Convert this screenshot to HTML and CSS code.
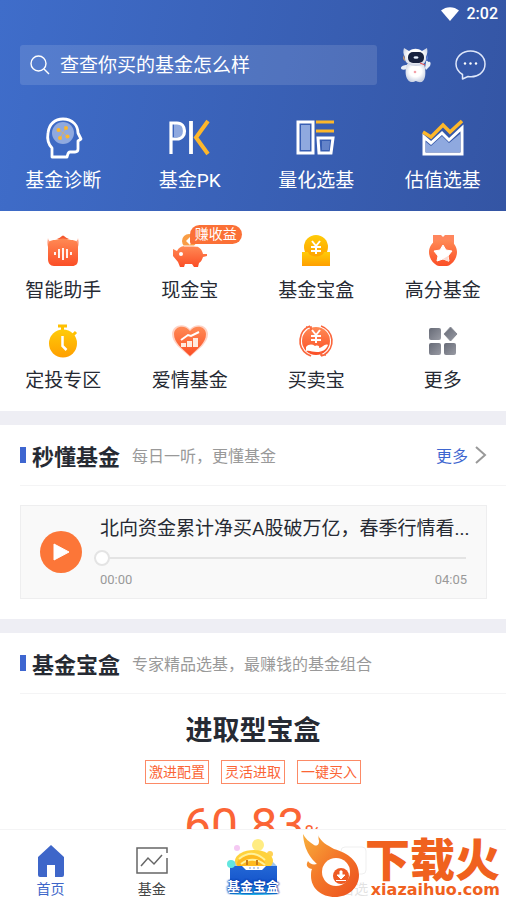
FILE: index.html
```html
<!DOCTYPE html>
<html lang="zh-CN">
<head>
    <meta charset="UTF-8">
    <meta name="viewport" content="width=device-width, initial-scale=1.0">
    <title>基金</title>
    <link rel="stylesheet" href="styles.css">
</head>
<body>

    <header class="top">
        <div class="status">
            <svg width="18" height="14" viewBox="0 0 18 14"><path d="M0 3.5C5-1 13-1 18 3.5L9 14z" fill="#fff"/></svg>
            <span>2:02</span>
        </div>

        <div class="search-row">
            <label class="search">
                <svg width="20" height="20" viewBox="0 0 20 20" fill="none" stroke="#fff" stroke-width="1.4"><circle cx="8.5" cy="8.5" r="7.5"/><path d="M14 14l5 5"/></svg>
                <input type="text" placeholder="查查你买的基金怎么样" aria-label="搜索基金">
            </label>
            <button class="icon-button" aria-label="机器人">
                <svg width="30" height="36" viewBox="0 0 30 36">
                    <defs>
                        <radialGradient id="robot" cx=".5" cy=".4" r=".6"><stop offset=".5" stop-color="#fff"/><stop offset="1" stop-color="#c8d0e2"/></radialGradient>
                    </defs>
                    <path d="M6 18C3 18 0 19 0 21s3 2 6 1zM24 21l1-6c0-2 2-1 2 0 3-1 3 2 2 4l-4 4z" fill="#e8edf6"/>
                    <path d="M6 17h17c2 6 2 14-1 17-2 2-5 1-7 0-2 1-6 2-8-1-3-4-3-10-1-16z" fill="url(#robot)"/>
                    <path d="M3 1l5 3c4-3 9-3 13 0l5-3c1 4 0 6-1 9 1 6-4 9-10 9S3 16 4 10C2 7 2 4 3 1z" fill="url(#robot)"/>
                    <path d="M3 8q-2 4 1 6z" fill="#f4ad60"/><path d="M26 8q2 4-1 6z" fill="#6685d8"/>
                    <rect x="7" y="5" width="16" height="11" rx="5" fill="#18223f"/>
                    <ellipse cx="15" cy="10.500" rx="2.500" ry="1.200" fill="#e8f2ff"/>
                    <path d="M19 16l5 2" stroke="#e94a4a" stroke-width="1"/>
                    <circle cx="14" cy="25" r="1.300" fill="#f4a0a8"/>
                </svg>
            </button>
            <button class="icon-button" aria-label="消息">
                <svg width="31" height="30" viewBox="0 0 31 30" fill="none" stroke="#dfe7fa" stroke-width="1.500">
                    <path d="M7.500 24.500L7.500 29l5.500-2.500C23 28 30 22 30 14 30 7 24 1 15.500 1S1 7 1 14c0 4.500 2.500 8 6.500 10.500z" stroke-linejoin="round"/>
                    <g fill="#fff" stroke="none"><circle cx="10" cy="13.500" r="1.200"/><circle cx="15.500" cy="13.500" r="1.200"/><circle cx="21" cy="13.500" r="1.200"/></g>
                </svg>
            </button>
        </div>

        <nav class="tools">
            <a href="#">
                <svg width="44" height="42" viewBox="-3 0 44 42" fill="none">
                    <path d="M8 40V31C4 27 3 22 4 16 5 7 11 2 19 2c10 0 15 7 15 14l3 6-3 2v8c0 2-1 3-3 3h-5c-2 0-2 2-3 5z" stroke="#fff" stroke-width="2.800" stroke-linejoin="round"/>
                    <circle cx="19" cy="16" r="11" fill="#8fa9df"/>
                    <path d="M15 13l8 6M22 11l-6 10" stroke="#c9ae82" stroke-width="1"/>
                    <g fill="#fdb72b"><circle cx="14.500" cy="13" r="2"/><circle cx="22" cy="11" r="2"/><circle cx="16" cy="21" r="2"/><circle cx="23.500" cy="19.500" r="2"/></g>
                </svg>
                <span>基金诊断</span>
            </a>
            <a href="#">
                <svg width="44" height="42" viewBox="0 0 44 42" fill="none">
                    <path d="M6 7h5c8 0 8 13 0 13H6z" fill="#8fa9df"/>
                    <path d="M3 37V6h6c10 0 10 16 0 16H4" stroke="#fff" stroke-width="3.200"/>
                    <path d="M23 4v33" stroke="#fff" stroke-width="3.800"/>
                    <path d="M40 4L28 20.500 40 37" stroke="#fdb72b" stroke-width="4"/>
                </svg>
                <span>基金PK</span>
            </a>
            <a href="#">
                <svg width="44" height="42" viewBox="0 0 44 42" fill="none">
                    <rect x="4" y="5" width="15" height="31" stroke="#fff" stroke-width="3"/>
                    <rect x="7" y="8" width="9" height="25" fill="#8fa9df"/>
                    <path d="M22 5h18M22 14h18" stroke="#fdb72b" stroke-width="3"/>
                    <path d="M24 21h15l-2 15H25z" stroke="#fff" stroke-width="3"/>
                    <path d="M28 24h8l-1 9h-7z" fill="#8fa9df" opacity=".5"/>
                </svg>
                <span>量化选基</span>
            </a>
            <a href="#">
                <svg width="44" height="42" viewBox="0 0 44 42" fill="none">
                    <path d="M5 25l5 4 11-10 7 7 11-9v18H5z" fill="#8fa9df"/>
                    <path d="M3 20l7 6 11-10 7 7 13-12v26H3z" stroke="#fff" stroke-width="3"/>
                    <path d="M2 15l8 5L22 8l7 7L41 4" stroke="#fdb72b" stroke-width="3.500"/>
                </svg>
                <span>估值选基</span>
            </a>
        </nav>
    </header>

    <main class="content">
        <nav class="menu">
            <a href="#">
                <svg width="36" height="36" viewBox="0 0 36 36">
                    <defs>
                        <linearGradient id="orange" x1="0" y1="0" x2="0" y2="1"><stop offset="0" stop-color="#ff8a55"/><stop offset="1" stop-color="#fb4e26"/></linearGradient>
                        <linearGradient id="yellow" x1="0" y1="0" x2="0" y2="1"><stop offset="0" stop-color="#ffcb08"/><stop offset="1" stop-color="#ff9f00"/></linearGradient>
                        <linearGradient id="grey" x1="0" y1="0" x2="1" y2="1"><stop offset="0" stop-color="#666a76"/><stop offset="1" stop-color="#999ba4"/></linearGradient>
                    </defs>
                    <path d="M3 5q0 3 5 5l-3 8Q1 13 3 5zM33 5q0 3-5 5l3 8q4-5 2-13z" fill="#ffa184"/>
                    <path d="M12 6q3-1 5-3 1-1 2 0 2 2 5 3z" fill="#f4592f"/>
                    <path d="M10 7q8-3 16 0c5 0 7 2 7 6v13c0 5-2 7-6 7H9c-4 0-6-3-6-7V13c0-4 2-6 7-6z" fill="url(#orange)"/>
                    <path d="M10 19v3M14 16v9M18 15v12M22 16v9M26 19v3" stroke="#fff" stroke-width="1.800"/>
                </svg>
                <span>智能助手</span>
            </a>
            <a href="#" class="has-badge">
                <svg width="36" height="36" viewBox="0 0 36 36">
                    <circle cx="17" cy="8" r="7" fill="#f99d45"/><path d="M14 8l4-4 2 4-2 4z" fill="#fff"/>
                    <path d="M1 16l4 2c2-4 5-5 9-5h7c6 0 9 3 10 8h4v2l-4 1c-1 3-2 5-4 6l-1 4h-4l-2-3h-7l-1 3H8l-2-5-5-6z" fill="url(#orange)"/>
                    <circle cx="9" cy="21" r="2" fill="#fff"/><path d="M12 13h13" stroke="#fff"/>
                </svg>
                <em class="badge">赚收益</em>
                <span>现金宝</span>
            </a>
            <a href="#">
                <svg width="36" height="36" viewBox="0 0 36 36">
                    <circle cx="18" cy="14" r="12" fill="url(#yellow)"/>
                    <path d="M4 19h6c1 6 15 6 16 0h6v14H4z" fill="url(#yellow)"/>
                    <path d="M14 8l4 5 4-5M18 13v8M13 14h10M13 18h10" fill="none" stroke="#fff" stroke-width="2"/>
                </svg>
                <span>基金宝盒</span>
            </a>
            <a href="#">
                <svg width="36" height="36" viewBox="0 0 36 36">
                    <path d="M8 2h8l2 2 2-2h9v14H8z" fill="#ff865d"/>
                    <path d="M11 7h14c4 3 7 7 7 12 0 4-2 9-6 12q-2 2-4 2h-8q-2 0-4-2c-4-3-6-8-6-12 0-5 3-9 7-12z" fill="url(#orange)"/>
                    <path d="M18 12l3 5 6 1-4 5 1 5-6-2-6 2 1-5-4-5 6-1z" fill="#fff" stroke="#fff" stroke-linejoin="round"/>
                    <path d="M24 29l-6-3 5-3z" fill="#fbd8cf"/>
                </svg>
                <span>高分基金</span>
            </a>
            <a href="#">
                <svg width="36" height="36" viewBox="0 0 36 36">
                    <path d="M13 3h9M17.500 3v6M28 12l3-3" fill="none" stroke="#ffc000" stroke-width="3"/>
                    <circle cx="18" cy="20.500" r="14" fill="url(#yellow)"/>
                    <path d="M17.500 13v10l4 4" fill="none" stroke="#fff" stroke-width="2.500"/>
                </svg>
                <span>定投专区</span>
            </a>
            <a href="#">
                <svg width="36" height="36" viewBox="0 0 36 36">
                    <path d="M18 34C9 26 0 20 0 11 0 2 12-1 18 6c6-7 18-4 18 5 0 9-9 15-18 23z" fill="#ffd2c4"/>
                    <path d="M18 33C10 25 2 20 2 11 2 3 13 1 18 8c5-7 16-5 16 3 0 9-8 14-16 22z" fill="url(#orange)"/>
                    <path d="M9 20h5v4H9zM15 18h5v6h-5zM21 15h5v9h-5z" fill="#ffe9df"/>
                    <path d="M9 17l7-5 3 1 8-4" fill="none" stroke="#fff" stroke-width="2"/>
                </svg>
                <span>爱情基金</span>
            </a>
            <a href="#">
                <svg width="36" height="36" viewBox="0 0 36 36">
                    <circle cx="18" cy="18" r="14" fill="url(#orange)"/>
                    <path d="M12 3A16 16 0 0 0 9 31l4 2M23 3a16 16 0 0 1 3 29l-3 1M8 4h5v4M28 32h-5v-4" fill="none" stroke="#fb673d" stroke-width="1.700"/>
                    <path d="M14 7l4 5 4-5M18 12v8M13 13h10M13 17h10" fill="none" stroke="#fff" stroke-width="2"/>
                    <path d="M8 24c3-3 6-3 9-1 3-1 5 0 4 2 3 0 6-5 9-3-2 5-6 7-11 7-5 0-7-2-11-1z" fill="#fff"/>
                </svg>
                <span>买卖宝</span>
            </a>
            <a href="#">
                <svg width="36" height="36" viewBox="0 0 36 36" fill="url(#grey)">
                    <rect x="4" y="5" width="12" height="12" rx="2"/><rect x="4" y="20" width="12" height="12" rx="2"/><rect x="19" y="20" width="12" height="12" rx="2"/>
                    <path d="M25.500 4l6.500 7-6.500 7-6.500-7z" stroke="#888b94" stroke-linejoin="round"/>
                </svg>
                <span>更多</span>
            </a>
        </nav>

        <section class="section">
            <div class="section-head">
                <h2>秒懂基金</h2>
                <p>每日一听，更懂基金</p>
                <a href="#" class="more">更多
                    <svg width="12" height="18" viewBox="0 0 12 18" fill="none" stroke="#999" stroke-width="2"><path d="M1 1l9 8-9 8"/></svg>
                </a>
            </div>
            <div class="player">
                <button class="play" aria-label="播放">
                    <svg width="18" height="18" viewBox="0 0 18 18"><path d="M2 1l15 8-15 8z" fill="#fff" stroke="#fff" stroke-linejoin="round"/></svg>
                </button>
                <div class="track">
                    <h3>北向资金累计净买A股破万亿，春季行情看...</h3>
                    <input type="range" min="0" max="245" value="0" aria-label="播放进度">
                    <div class="times"><span>00:00</span><span>04:05</span></div>
                </div>
            </div>
        </section>

        <section class="section">
            <div class="section-head">
                <h2>基金宝盒</h2>
                <p>专家精品选基，最赚钱的基金组合</p>
            </div>
            <div class="box">
                <h3>进取型宝盒</h3>
                <div class="tags">
                    <span>激进配置</span>
                    <span>灵活进取</span>
                    <span>一键买入</span>
                </div>
                <div class="rate">60.83<small>%</small></div>
            </div>
        </section>
    </main>

    <footer class="tabbar">
        <a href="#" class="active">
            <svg width="30" height="34" viewBox="0 0 30 34"><path d="M15 1l13 12v18q0 2-2 2h-7V21h-8v12H4q-2 0-2-2V13z" fill="#3e66c9"/></svg>
            <span>首页</span>
        </a>
        <a href="#">
            <svg width="34" height="34" viewBox="0 0 34 34" fill="none" stroke="#666" stroke-width="1.500"><path d="M32 9V4H2v25h30V14M6 22l7-8 6 6 8-9"/></svg>
            <span>基金</span>
        </a>
        <a href="#" class="promo">
            <svg width="52" height="56" viewBox="0 0 52 56">
                <defs>
                    <linearGradient id="blue" x1="0" y1="0" x2="0" y2="1"><stop offset="0" stop-color="#2367d5"/><stop offset=".6" stop-color="#1555cb"/><stop offset="1" stop-color="#1dbbed"/></linearGradient>
                </defs>
                <circle cx="31" cy="6" r="6" fill="#ffec82"/><circle cx="10" cy="9" r="3" fill="#f5c9f3"/><circle cx="43" cy="15" r="3" fill="#ffd155"/>
                <path d="M3 27l10-10h27l10 10z" fill="#9fc6ee"/>
                <ellipse cx="27" cy="22" rx="19" ry="11" fill="#ffd23c"/>
                <ellipse cx="24" cy="25" rx="14" ry="9" fill="#ffba20"/>
                <path d="M12 20q13-11 26 1M14 25q12-9 24 1" fill="none" stroke="#fff19a" stroke-width="2"/>
                <path d="M20 21v5M30 21v5" stroke="#c77b1b" stroke-width="2"/>
                <path d="M3 27h47v28q-23 2-47 0z" fill="url(#blue)"/>
                <path d="M15 27h24l-4 4H19z" fill="#fff"/>
                <path d="M22 29h2M26 29h2M30 29h2" stroke="#779bd8"/>
                <circle cx="4" cy="25" r="4" fill="#63e6df"/>
            </svg>
            <span>基金宝盒</span>
        </a>
        <a href="#" class="faded">
            <svg width="34" height="34" viewBox="0 0 34 34" fill="none" stroke="#999"><rect x="4" y="3" width="25" height="27" rx="4"/></svg>
            <span>自选</span>
        </a>

        <div class="brand">
            <svg width="60" height="64" viewBox="0 0 60 64">
                <defs>
                    <linearGradient id="fire" x1="0" y1="0" x2="1" y2="1"><stop offset="0" stop-color="#f8b03c"/><stop offset=".45" stop-color="#f47a2a"/><stop offset="1" stop-color="#ec4f1d"/></linearGradient>
                </defs>
                <path d="M2 0c2 4 6 8 11 11 2 1 5 1 5-4-1-3 0-4-1-6 3 7 9 10 16 14 14 4 25 12 25 26 0 13-11 22-24 22-14 0-24-9-24-21 0-3 0-5 1-7-6-1-6-5-4-8 2 3 5 4 9 3C12 26 3 18 2 0z" fill="url(#fire)"/>
                <circle cx="35" cy="38" r="14" fill="#fff"/>
                <circle cx="40" cy="42" r="8" fill="#ee5a23"/>
                <path d="M39 37h2v4h3l-4 4-4-4h3zM35 46.500h10" fill="#fff" stroke="#fff" stroke-width="1"/>
            </svg>
            <div class="brand-text">
                <strong>下载火</strong>
                <span>xiazaihuo.com</span>
            </div>
        </div>
    </footer>

</body>
</html>
```
FILE: styles.css
```css
* {
    box-sizing: border-box;
}
body {
    margin: 0;
    height: 100vh;
    display: flex;
    flex-direction: column;
    overflow: hidden;
    background: #fff;
    color: #262a33;
    font-family: Roboto, "Noto Sans CJK SC", sans-serif;
}
h2, h3, p {
    margin: 0;
}
a {
    color: inherit;
    text-decoration: none;
}
button {
    border: none;
    padding: 0;
    background: none;
    cursor: pointer;
}
svg {
    display: block;
    flex: none;
}

/* header */
.top {
    flex: none;
    background: linear-gradient(100deg, #3f6dca, #3455a4);
    color: #fff;
}
.status {
    display: flex;
    justify-content: flex-end;
    align-items: center;
    gap: 8px;
    height: 27px;
    padding-right: 8px;
    font-size: 16px;
    font-weight: 500;
}
.search-row {
    display: flex;
    align-items: center;
    gap: 24px;
    padding: 18px 20px 0;
}
.search {
    flex: 1;
    display: flex;
    align-items: center;
    gap: 10px;
    height: 40px;
    padding: 0 10px;
    border-radius: 3px;
    background: rgba(255, 255, 255, 0.12);
}
.search input {
    flex: 1;
    min-width: 0;
    border: none;
    padding: 0;
    outline: none;
    background: none;
    color: #fff;
    font-family: inherit;
    font-size: 19px;
}
.search input::placeholder {
    color: #fff;
    opacity: 1;
}

/* icon links */
.tools,
.menu {
    display: grid;
    grid-template-columns: repeat(4, 1fr);
    font-size: 19px;
    line-height: 28px;
}
.tools {
    padding: 32px 0 16px;
}
.menu {
    padding: 22px 0 12px;
    row-gap: 14px;
}
.tools a,
.menu a {
    display: flex;
    flex-direction: column;
    align-items: center;
}
.tools a {
    gap: 8px;
}
.menu a {
    gap: 8px;
    padding-bottom: 4px;
    color: #262a33;
}
.has-badge {
    position: relative;
}
.badge {
    position: absolute;
    top: -8px;
    left: 50%;
    padding: 0 5px;
    border-radius: 10px 10px 10px 2px;
    background: #fb7036;
    color: #fff;
    font-size: 14px;
    font-style: normal;
    line-height: 19px;
}

.content {
    flex: 1;
    min-height: 0;
    overflow: hidden;
}

/* sections */
.section {
    border-top: 14px solid #eeeef4;
}
.section-head {
    display: flex;
    align-items: center;
    height: 61px;
    margin-left: 20px;
    padding-right: 19px;
    border-bottom: 1px solid #f4f4f5;
}
.section-head::before {
    content: "";
    width: 6px;
    height: 16px;
    margin-right: 6px;
    background: #3e66d0;
}
.section-head h2 {
    font-size: 22px;
}
.section-head p {
    margin-left: 12px;
    color: #999;
    font-size: 16px;
}
.more {
    display: flex;
    align-items: center;
    gap: 7px;
    margin-left: auto;
    color: #3e66d0;
    font-size: 16px;
}

/* audio player */
.player {
    display: flex;
    align-items: center;
    gap: 18px;
    margin: 19px 19px 20px 20px;
    padding: 9px 16px 9px 19px;
    border: 1px solid #eeeeef;
    background: #f9f9f9;
}
.play {
    display: flex;
    align-items: center;
    justify-content: center;
    flex: none;
    width: 42px;
    height: 42px;
    border-radius: 50%;
    background: #fc7638;
}
.track {
    flex: 1;
    min-width: 0;
}
.track h3 {
    overflow: hidden;
    font-size: 19px;
    font-weight: 400;
    line-height: 28px;
    text-overflow: ellipsis;
    white-space: nowrap;
}
.track input {
    display: block;
    appearance: none;
    width: calc(100% + 2px);
    height: 16px;
    margin: 7px 0 5px -6px;
    background: linear-gradient(#e4e4e4, #e4e4e4) center / 100% 2px no-repeat;
}
.track input::-webkit-slider-thumb {
    appearance: none;
    width: 16px;
    height: 16px;
    border: 2px solid #e4e4e4;
    border-radius: 50%;
    background: #fff;
}
.times {
    display: flex;
    justify-content: space-between;
    padding-right: 3px;
    color: #999;
    font-size: 13px;
    line-height: 18px;
}

/* fund box */
.box {
    display: flex;
    flex-direction: column;
    align-items: center;
    padding-top: 17px;
}
.box h3 {
    font-size: 27px;
    line-height: 40px;
}
.tags {
    display: flex;
    gap: 12px;
    margin-top: 9px;
}
.tags span {
    padding: 0 3px;
    border: 1px solid #fc8a66;
    color: #fb6535;
    font-size: 14px;
    line-height: 22px;
}
.rate {
    margin-top: 12px;
    color: #fb6535;
    font-size: 48px;
    line-height: 60px;
}
.rate small {
    font-size: 24px;
}

/* bottom bar */
.tabbar {
    position: relative;
    flex: none;
    display: grid;
    grid-template-columns: repeat(5, 1fr);
    height: 71px;
    border-top: 1px solid #f4f4f5;
    background: #fff;
    color: #444;
    font-size: 14px;
    line-height: 20px;
}
.tabbar a {
    display: flex;
    flex-direction: column;
    align-items: center;
    gap: 1px;
    padding-top: 14px;
}
.tabbar .active {
    color: #3e66c9;
}
.tabbar .promo {
    position: relative;
    padding-top: 9px;
}
.promo span {
    position: absolute;
    bottom: 3px;
    color: #fff;
    font-size: 13px;
    font-weight: 700;
    white-space: nowrap;
    text-shadow: 0 0 2px #0a3fae, 0 0 2px #0a3fae, 0 0 2px #0a3fae;
}
.tabbar .faded {
    opacity: 0.15;
}
.brand {
    position: absolute;
    right: 6px;
    bottom: 2px;
    display: flex;
    gap: 4px;
    color: #f0611e;
}
.brand-text {
    display: flex;
    flex-direction: column;
    align-items: flex-end;
    justify-content: flex-end;
}
.brand strong {
    font-size: 45px;
    font-weight: 900;
    line-height: 40px;
}
.brand-text span {
    font-family: "DejaVu Sans", sans-serif;
    font-size: 16px;
    font-weight: 700;
    line-height: 16px;
}
```
